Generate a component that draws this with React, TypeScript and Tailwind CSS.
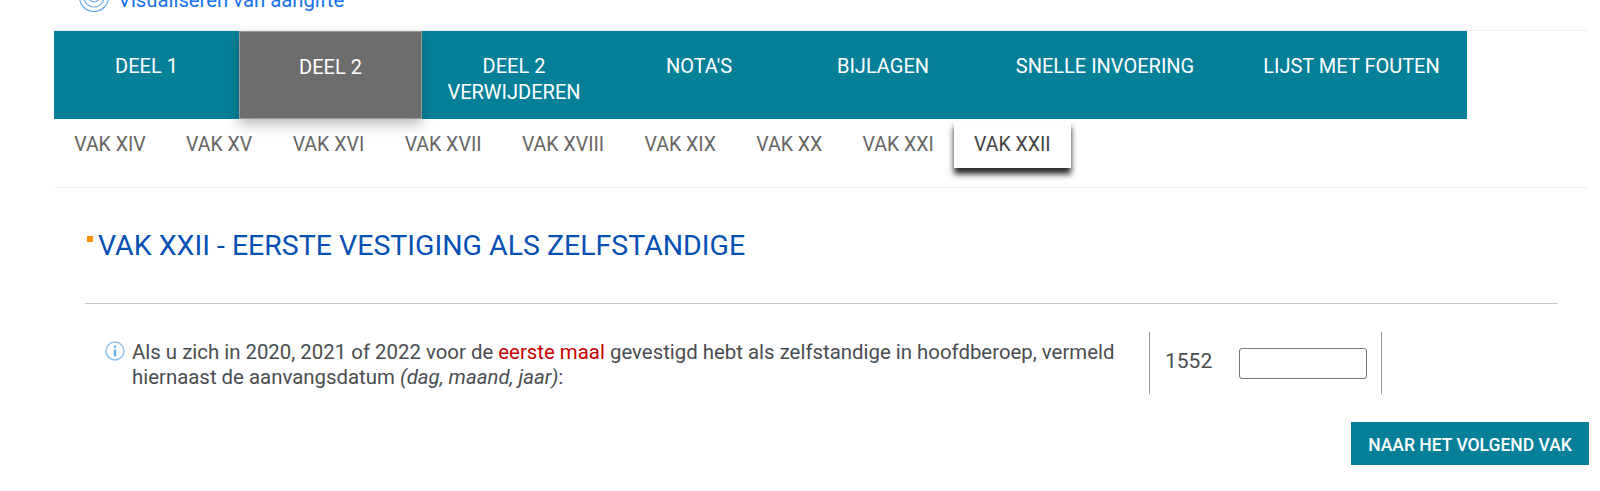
import React from 'react';

const mainTabs = [
  { label: 'DEEL 1', width: 'w-[185px]' },
  { label: 'DEEL 2', width: 'w-[183px]', active: true },
  { label: 'DEEL 2 VERWIJDEREN', width: 'w-[184px]' },
  { label: "NOTA'S", width: 'w-[186px]' },
  { label: 'BIJLAGEN', width: 'w-[182px]' },
  { label: 'SNELLE INVOERING', width: 'w-[262px]' },
  { label: 'LIJST MET FOUTEN', width: 'w-[231px]' },
];

const subTabs = ['VAK XIV', 'VAK XV', 'VAK XVI', 'VAK XVII', 'VAK XVIII', 'VAK XIX', 'VAK XX', 'VAK XXI'];

const App: React.FC = () => {
  return (
    <div className="h-[491px] w-[1600px] overflow-hidden bg-white font-['Roboto',sans-serif]">
      {/* Visualiseren link, cut off by the top of the window */}
      <div className="ml-[54px] mr-[11px] flex h-[31px] items-start border-b border-[#f0f0f0] pl-6">
        <svg className="-mt-[12px] shrink-0" width="32" height="24" viewBox="0 0 32 24" fill="none" stroke="#6aaee8" strokeWidth="1.2">
          <circle cx="16" cy="9" r="14.5" />
          <circle cx="16" cy="9" r="10" />
          <circle cx="16" cy="9" r="5" />
        </svg>
        <span className="-mt-[10px] ml-2 text-[20.3px] leading-[20px] text-[#1a73e8]">Visualiseren van aangifte</span>
      </div>

      {/* Main tabs */}
      <div className="ml-[54px] flex h-[88px] w-[1413px] bg-[#068099]">
        {mainTabs.map((tab) => (
          <div
            key={tab.label}
            className={
              tab.active
                ? `${tab.width} border border-[#9a9a9a] bg-[#6d6d6d] px-5 pt-[22px] text-center text-[20px] leading-[26px] text-white shadow-[0_6px_12px_rgba(0,0,0,0.25)]`
                : `${tab.width} px-5 pt-[22px] text-center text-[20px] leading-[26px] text-white`
            }
          >
            {tab.label}
          </div>
        ))}
      </div>

      {/* Sub tabs */}
      <div className="ml-[54px] mr-[11px] flex h-[69px] items-start border-b border-[#f0f0f0] pt-[2px]">
        {subTabs.map((tab) => (
          <div key={tab} className="flex h-[47px] items-center px-[20.2px] pt-[1px] text-[19.5px] text-[#666666]">
            {tab}
          </div>
        ))}
        <div className="flex h-[47px] items-center bg-white px-5 pt-[1px] text-[19.5px] text-[#444444] shadow-[0_6px_6px_rgba(0,0,0,0.85)]">
          VAK XXII
        </div>
      </div>

      <div className="ml-[85px] mr-[11px]">
        {/* Title */}
        <div className="mr-[31px] flex h-[116px] items-start border-b border-[#c8c8c8] pt-[40px]">
          <span className="ml-[2px] mt-[8px] h-[6px] w-[6px] bg-[#ff9000]" />
          <h2 className="ml-[5px] text-[28.5px] leading-[36px] text-[#0650b4]">
            VAK XXII - EERSTE VESTIGING ALS ZELFSTANDIGE
          </h2>
        </div>

        {/* Question row */}
        <div className="mt-[28px] flex h-[62px] items-start">
          <svg className="ml-[20px] mt-[9px] shrink-0" width="20" height="20" viewBox="0 0 20 20" fill="none">
            <circle cx="10" cy="10" r="9" stroke="#8cc0ec" strokeWidth="1.4" />
            <circle cx="10" cy="5.8" r="1.3" fill="#6aaee8" />
            <rect x="8.8" y="8.4" width="2.4" height="7" rx="0.6" fill="#6aaee8" />
          </svg>
          <p className="ml-[7px] mt-[8px] w-[1017px] pr-[12px] text-[20.4px] leading-[25px] text-[#4a4d50]">
            Als u zich in 2020, 2021 of 2022 voor de <span className="text-[#c80000]">eerste maal</span> gevestigd hebt
            als zelfstandige in hoofdberoep, vermeld hiernaast de aanvangsdatum <em>(dag, maand, jaar)</em>:
          </p>
          <div className="flex h-[62px] w-[233px] items-center border-x border-[#9a9a9a] pl-[15px]">
            <span className="mb-[3px] text-[21px] text-[#4a4d50]">1552</span>
            <input
              type="text"
              aria-label="1552"
              className="ml-[27px] h-[31px] w-[128px] rounded-[3px] border border-[#777777] bg-white"
            />
          </div>
        </div>

        {/* Next button */}
        <div className="mt-[28px] flex justify-end">
          <button className="h-[43px] w-[238px] bg-[#068099] pt-[3px] text-[17.5px] font-medium text-white">
            NAAR HET VOLGEND VAK
          </button>
        </div>
      </div>
    </div>
  );
};

export default App;
